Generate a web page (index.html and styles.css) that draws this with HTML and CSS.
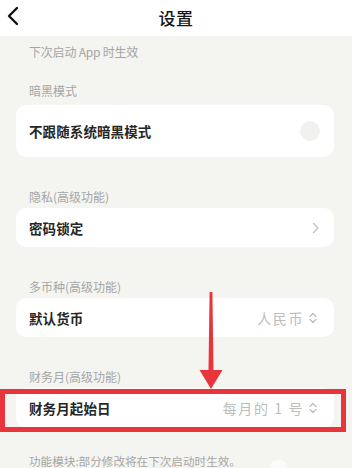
FILE: index.html
```html
<!DOCTYPE html>
<html lang="zh-CN">
<head>
<meta charset="utf-8">
<title>设置</title>
<link rel="stylesheet" href="styles.css">
</head>
<body>
<div class="screen">
  <header class="topbar">
    <svg class="back" width="14" height="20" viewBox="0 0 14 20"><path d="M11 2 L3 10 L11 18" fill="none" stroke="#111" stroke-width="2.4" stroke-linecap="round" stroke-linejoin="round"/></svg>
    <h1 class="title">设置</h1>
  </header>

  <main class="content">
    <p class="note">下次启动 App 时生效</p>

    <p class="label label-first">暗黑模式</p>
    <div class="card card-tall">
      <span class="item">不跟随系统暗黑模式</span>
      <span class="knob"></span>
    </div>

    <p class="label">隐私(高级功能)</p>
    <div class="card">
      <span class="item">密码锁定</span>
      <svg class="chev" width="8" height="12" viewBox="0 0 8 12"><path d="M1.5 1.5 L6 6 L1.5 10.5" fill="none" stroke="#c4c4c2" stroke-width="1.5" stroke-linecap="round" stroke-linejoin="round"/></svg>
    </div>

    <p class="label">多币种(高级功能)</p>
    <div class="card">
      <span class="item">默认货币</span>
      <span class="value">人民币
        <svg class="updown" width="8" height="12" viewBox="0 0 8 12"><path d="M1 4.5 L4 1.5 L7 4.5 M1 7.5 L4 10.5 L7 7.5" fill="none" stroke="#bdbdbb" stroke-width="1.3" stroke-linecap="round" stroke-linejoin="round"/></svg>
      </span>
    </div>

    <p class="label">财务月(高级功能)</p>
    <div class="card card-last">
      <span class="item">财务月起始日</span>
      <span class="value">每月的 1 号
        <svg class="updown" width="8" height="12" viewBox="0 0 8 12"><path d="M1 4.5 L4 1.5 L7 4.5 M1 7.5 L4 10.5 L7 7.5" fill="none" stroke="#bdbdbb" stroke-width="1.3" stroke-linecap="round" stroke-linejoin="round"/></svg>
      </span>
    </div>

    <div class="footer-row">
      <p class="label label-last">功能模块:部分修改将在下次启动时生效。</p>
      <span class="blob"></span>
    </div>
  </main>

  <div class="highlight"></div>
  <svg class="arrow" width="30" height="100" viewBox="0 0 30 100">
    <polygon points="13.6,0 16.4,0 17.5,79 12.5,79" fill="#e8343a"/>
    <polygon points="3.5,78 26.5,78 15,97" fill="#e8343a"/>
  </svg>
</div>
</body>
</html>
```

FILE: styles.css
```css
* { box-sizing: border-box; }
html, body { margin: 0; padding: 0; }
body {
  background: #f4f4f1;
  font-family: "Noto Sans CJK SC", "Noto Sans", sans-serif;
  overflow: hidden;
}
.screen {
  position: relative;
  width: 352px;
  height: 468px;
  overflow: hidden;
  background: #f4f4f1;
}
.topbar {
  height: 36px;
  background: #ffffff;
  display: flex;
  align-items: center;
  justify-content: center;
  position: relative;
}
.back {
  position: absolute;
  left: 6px;
  top: 6px;
}
.title {
  margin: 0;
  font-size: 17px;
  font-weight: 500;
  color: #151515;
  line-height: 36px;
  letter-spacing: 0.5px;
}
.content {
  padding: 0 18px 0 16px;
}
.note, .label {
  margin: 0;
  padding: 32px 0 3px 13px;
  font-size: 12px;
  line-height: 16px;
  color: #a6a6a4;
}
.note { padding-top: 8px; padding-bottom: 0; letter-spacing: -0.2px; }
.label-first { padding-top: 23px; padding-bottom: 6px; }
.label-last {
  padding-top: 26px;
  padding-bottom: 0;
  font-size: 11.6px;
  line-height: 14px;
}
.card {
  background: #ffffff;
  border-radius: 10px;
  height: 39px;
  display: flex;
  align-items: center;
  justify-content: space-between;
  padding: 0 14px 0 13px;
}
.card-tall { height: 52px; }
.card-last { height: 40px; }
.item {
  font-size: 13.5px;
  font-weight: 700;
  color: #262626;
  letter-spacing: 0.1px;
}
.knob {
  width: 20px;
  height: 20px;
  border-radius: 50%;
  background: #f1f1ef;
}
.value {
  display: flex;
  align-items: center;
  gap: 5px;
  font-size: 14px;
  letter-spacing: 1.6px;
  color: #bdbdbb;
  margin-right: 3px;
}
.footer-row {
  display: flex;
  align-items: flex-start;
  position: relative;
}
.blob {
  position: absolute;
  left: 254px;
  top: 32px;
  width: 17px;
  height: 14px;
  border-radius: 7px 7px 0 0;
  background: #fbfbfa;
}
.highlight {
  position: absolute;
  left: 0;
  top: 389px;
  width: 346px;
  height: 43px;
  border: 5.5px solid #e8343a;
}
.arrow {
  position: absolute;
  left: 196px;
  top: 292px;
}
```
